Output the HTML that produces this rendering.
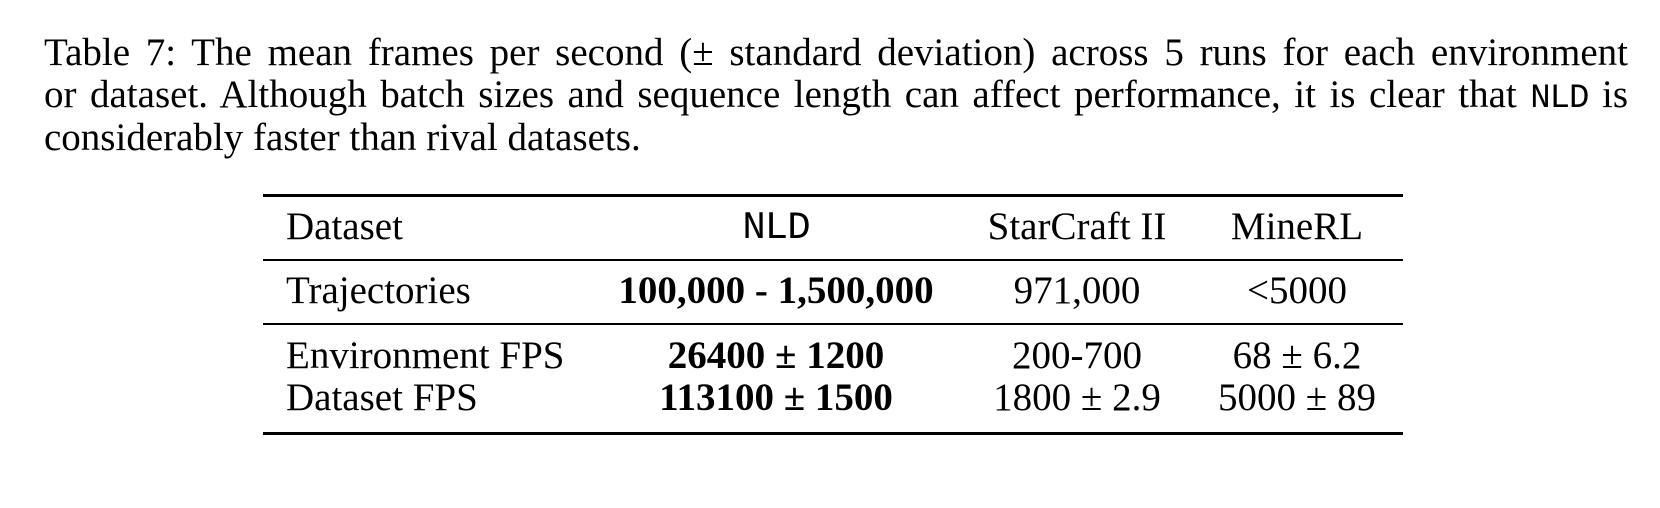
<!DOCTYPE html>
<html><head><meta charset="utf-8"><style>
html,body{margin:0;padding:0;background:#fff;}
body{width:1660px;height:508px;position:relative;overflow:hidden;font-family:"Liberation Serif",serif;color:#000;}
.cl{position:absolute;left:44px;width:1584px;font-size:39px;line-height:44px;text-align:justify;text-align-last:justify;white-space:nowrap;}
.cl.last{text-align:left;text-align-last:left;}
.mono{font-family:"Liberation Mono",monospace;font-size:31px;letter-spacing:-1px;}
.cl .mono{font-size:34px;}
.rule{position:absolute;left:263px;width:1140px;background:#000;}
.t{position:absolute;font-size:39px;line-height:39px;white-space:nowrap;}
.c{transform:translateX(-50%);}
b{font-weight:bold;}
</style></head><body>
<div class="cl" style="top:31px;white-space:normal">Table 7: The mean frames per second (± standard deviation) across 5 runs for each environment</div>
<div class="cl" style="top:73px;white-space:normal">or dataset. Although batch sizes and sequence length can affect performance, it is clear that <span class="mono">NLD</span> is</div>
<div class="cl last" style="top:116px">considerably faster than rival datasets.</div>
<div class="rule" style="top:194px;height:3px"></div>
<div class="rule" style="top:259px;height:2px"></div>
<div class="rule" style="top:323px;height:2px"></div>
<div class="rule" style="top:432px;height:3px"></div>

<div class="t" style="left:286px;top:207px">Dataset</div>
<div class="t c mono" style="left:776px;top:209px">NLD</div>
<div class="t c" style="left:1077px;top:207px">StarCraft II</div>
<div class="t c" style="left:1297px;top:207px">MineRL</div>

<div class="t" style="left:286px;top:271px">Trajectories</div>
<div class="t c" style="left:776px;top:271px"><b>100,000 - 1,500,000</b></div>
<div class="t c" style="left:1077px;top:271px">971,000</div>
<div class="t c" style="left:1297px;top:271px">&lt;5000</div>

<div class="t" style="left:286px;top:336px">Environment FPS</div>
<div class="t c" style="left:776px;top:336px"><b>26400 ± 1200</b></div>
<div class="t c" style="left:1077px;top:336px">200-700</div>
<div class="t c" style="left:1297px;top:336px">68 ± 6.2</div>

<div class="t" style="left:286px;top:378px">Dataset FPS</div>
<div class="t c" style="left:776px;top:378px"><b>113100 ± 1500</b></div>
<div class="t c" style="left:1077px;top:378px">1800 ± 2.9</div>
<div class="t c" style="left:1297px;top:378px">5000 ± 89</div>
</body></html>
